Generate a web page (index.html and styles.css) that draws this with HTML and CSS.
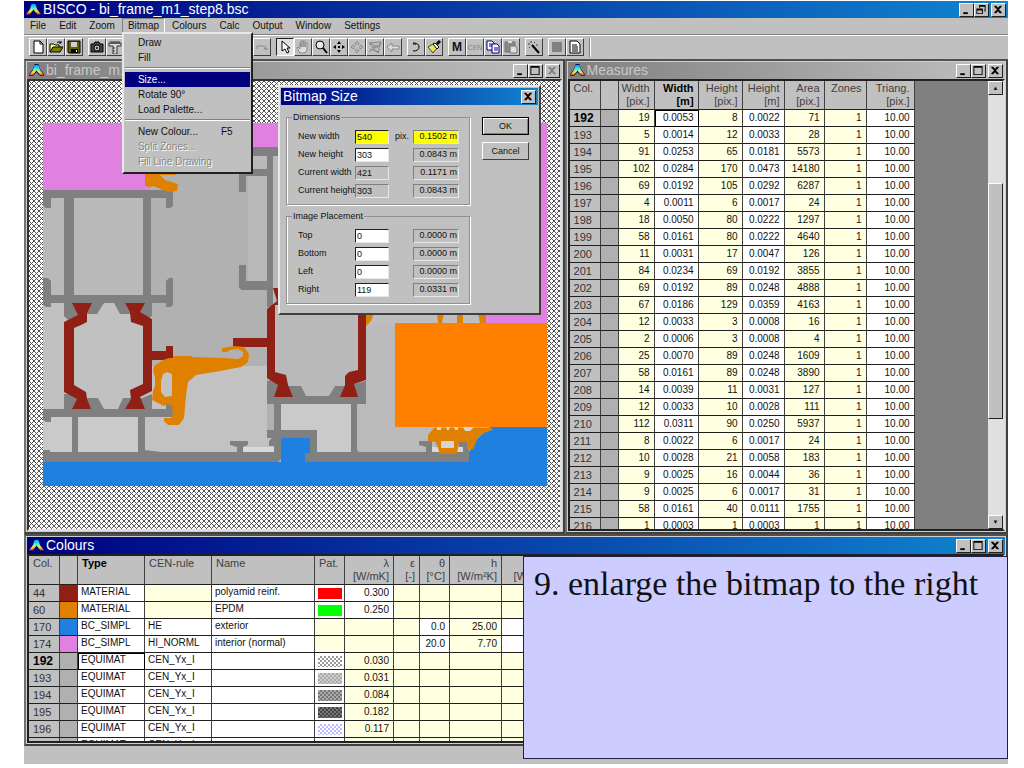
FILE: index.html
```html
<!DOCTYPE html>
<html lang="en">
<head>
    <meta charset="UTF-8">
    <meta name="viewport" content="width=device-width, initial-scale=1.0">
    <title>BISCO - bi_frame_m1_step8.bsc</title>
    <link rel="stylesheet" href="styles.css">
</head>
<body>
    <!-- shared icons -->
    <svg class="defs" aria-hidden="true">
        <defs>
            <linearGradient id="heat" x1="0" y1="0" x2="0" y2="1">
                <stop offset="0" stop-color="#00a0ff"/>
                <stop offset="0.4" stop-color="#40f0e0"/>
                <stop offset="0.7" stop-color="#ffe840"/>
                <stop offset="1" stop-color="#f04020"/>
            </linearGradient>
        </defs>
        <symbol id="logo" viewBox="0 0 16 14">
            <path d="M6 0h4l2 6 4 5v2h-4L8 9l-4 4H0v-2l4-5z" fill="#101050"/>
            <path d="M6 1h4l2 6 4 5h-4L8 7l-4 5H0l4-5z" fill="url(#heat)"/>
        </symbol>
        <symbol id="min" viewBox="0 0 12 12"><path d="M3 9h5v2H3z"/></symbol>
        <symbol id="max" viewBox="0 0 12 12"><path d="M1 1h10v10H1zM2 3v7h8V3z" fill-rule="evenodd"/></symbol>
        <symbol id="restore" viewBox="0 0 12 12"><path d="M4 1h7v7H9V7h1V3H5v1H4zM1 5h7v6H1zM2 7v3h5V7z" fill-rule="evenodd"/></symbol>
        <symbol id="close" viewBox="0 0 12 12"><path d="M2 2h2l2 2 2-2h2v1L7 6l3 3v1H8L6 8l-2 2H2V9l3-3-3-3z"/></symbol>
    </svg>

    <div class="app">
        <header class="titlebar active">
            <svg class="logo"><use href="#logo"/></svg>
            <h1>BISCO - bi_frame_m1_step8.bsc</h1>
            <div class="win-buttons">
                <button type="button" aria-label="Minimize"><svg><use href="#min"/></svg></button>
                <button type="button" aria-label="Restore"><svg><use href="#restore"/></svg></button>
                <button type="button" class="close" aria-label="Close"><svg><use href="#close"/></svg></button>
            </div>
        </header>

        <nav class="menubar">
            <button type="button">File</button>
            <button type="button">Edit</button>
            <button type="button">Zoom</button>
            <div class="menu-holder">
                <button type="button" class="open">Bitmap</button>
                <div class="dropdown">
                    <button type="button">Draw</button>
                    <button type="button">Fill</button>
                    <hr>
                    <button type="button" class="selected">Size...</button>
                    <button type="button">Rotate 90°</button>
                    <button type="button">Load Palette...</button>
                    <hr>
                    <button type="button"><span class="item">New Colour...</span><span>F5</span></button>
                    <button type="button" disabled>Split Zones...</button>
                    <button type="button" disabled>Fill Line Drawing</button>
                </div>
            </div>
            <button type="button">Colours</button>
            <button type="button">Calc</button>
            <button type="button">Output</button>
            <button type="button">Window</button>
            <button type="button">Settings</button>
        </nav>

        <div class="toolbar">
            <div class="group">
                <button type="button" aria-label="New"><svg viewBox="0 0 14 14"><path d="M3 1h6l3 3v9H3z" fill="#fff" stroke="#000"/><path d="M9 1v3h3" fill="none" stroke="#000"/></svg></button>
                <button type="button" aria-label="Open"><svg viewBox="0 0 14 14"><path d="M1 12V4h4l1 1h4v2" fill="#ffff80" stroke="#000"/><path d="M1 12l3-5h10l-3 5z" fill="#808000" stroke="#000"/><path d="M8 3q2-3 4 0M12 1v2h-2" fill="none" stroke="#000"/></svg></button>
                <button type="button" aria-label="Save"><svg viewBox="0 0 14 14"><path d="M1 1h12v12H2l-1-1z" fill="#606000" stroke="#000"/><path d="M4 2h6v5H4z" fill="#d0d0d0"/><path d="M4 9h7v4H4z"/><path d="M9 10h1v2H9z" fill="#fff"/></svg></button>
            </div>
            <div class="group">
                <button type="button" aria-label="Snapshot"><svg viewBox="0 0 14 14"><path d="M1 4h3l1-2h4l1 2h3v8H1z" fill="#444" stroke="#000"/><circle cx="7" cy="8" r="3" fill="#c0c0c0" stroke="#000"/><circle cx="7" cy="8" r="1"/></svg></button>
                <button type="button" aria-label="Measure"><svg viewBox="0 0 14 14"><path d="M1 3h12v3H9v8H5V6H1z" fill="#d8d8d8" stroke="#333"/><path d="M3 1v3M5 1v3M7 1v3M9 1v3M11 1v3M5 8h2M5 11h2" stroke="#333"/></svg></button>
            </div>
            <div class="group after-menu">
                <button type="button" aria-label="Repeat"><svg viewBox="0 0 14 14"><path d="M2 9V6h6q3 0 3 3M9 8l2 2 2-2" fill="none" stroke="#888"/></svg></button>
            </div>
            <div class="group">
                <button type="button" class="pressed" aria-label="Select"><svg viewBox="0 0 14 14"><path d="M4 1v10l3-2 2 4 2-1-2-4h3z" fill="#fff" stroke="#000"/></svg></button>
                <button type="button" aria-label="Pan"><svg viewBox="0 0 14 14"><path d="M4 13L1 8l1-1 2 2V3h1v4V1h2v6V1h2v6V3h2v7l-2 3z" fill="#ddd" stroke="#888"/></svg></button>
                <button type="button" aria-label="Zoom"><svg viewBox="0 0 14 14"><circle cx="6" cy="5" r="4" fill="#e8e8e8" stroke="#000"/><path d="M9 8l4 5" stroke="#000" stroke-width="2"/></svg></button>
                <button type="button" aria-label="Centre"><svg viewBox="0 0 14 14"><path d="M7 1l2 3H5zM7 13l2-3H5zM1 7l3-2v4zM13 7l-3-2v4zM6 6h2v2H6z"/></svg></button>
                <button type="button" aria-label="Move"><svg viewBox="0 0 14 14"><path d="M7 1l2 3H5zM7 13l2-3H5zM1 7l3-2v4zM13 7l-3-2v4z" fill="#ddd" stroke="#888"/></svg></button>
                <button type="button" aria-label="Mesh"><svg viewBox="0 0 14 14"><path d="M1 3l12-1-3 11zM1 3l9 4 3-5M4 7l6 0M2 9l9 3M1 12l9-7" fill="none" stroke="#888"/></svg></button>
                <button type="button" aria-label="Back"><svg viewBox="0 0 14 14"><path d="M1 7l5-4v3h7v3H6v3z" fill="#ddd" stroke="#888"/></svg></button>
            </div>
            <div class="group">
                <button type="button" aria-label="Arc"><svg viewBox="0 0 14 14"><path d="M4 3q6 0 6 4t-6 4" fill="none" stroke="#000"/><path d="M4 4h3" stroke="#000"/></svg></button>
                <button type="button" aria-label="Brush"><svg viewBox="0 0 14 14"><path d="M1 7l5-3 4 4-4 5z" fill="#f0e840" stroke="#444"/><path d="M6 4l2-1 4 4-2 2z" fill="#fff" stroke="#000"/><path d="M10 4l3-3" stroke="#000" stroke-width="3"/></svg></button>
            </div>
            <div class="group">
                <button type="button" class="letter">M</button>
                <button type="button" class="tiny">CEN</button>
                <button type="button" aria-label="Copy"><svg viewBox="0 0 14 14"><path d="M1 1h5l2 2v7H1z" fill="#fff" stroke="#000080"/><path d="M6 4h5l2 2v7H6z" fill="#fff" stroke="#000080"/><path d="M3 4h3M3 6h3M8 8h4M8 10h4" stroke="#000080"/></svg></button>
                <button type="button" aria-label="Paste"><svg viewBox="0 0 14 14"><path d="M1 2h10v10H1z" fill="#888" stroke="#777"/><path d="M4 1h4v2H4z" fill="#ddd"/><path d="M6 6h5l2 2v5H6z" fill="#ddd" stroke="#777"/></svg></button>
            </div>
            <div class="group">
                <button type="button" aria-label="Wizard"><svg viewBox="0 0 14 14"><path d="M5 5l7 8" stroke="#000" stroke-width="2"/><path d="M4 1v2M1 4h2M8 2L7 3M2 8l1-1M9 5h2" stroke="#444"/></svg></button>
            </div>
            <div class="group">
                <button type="button" aria-label="Stop"><svg viewBox="0 0 14 14"><path d="M2 2h10v10H2z" fill="#808080"/></svg></button>
                <button type="button" aria-label="Report"><svg viewBox="0 0 14 14"><path d="M2 1h7l3 3v9H2z" fill="#fff" stroke="#000"/><path d="M4 5h5M4 7h6M4 9h6M4 11h6" stroke="#000"/></svg></button>
            </div>
            <div class="tool-end"></div>
        </div>

        <main class="mdi">
            <section class="window bitmap">
                <div class="titlebar">
                    <svg class="logo"><use href="#logo"/></svg>
                    <h2>bi_frame_m1</h2>
                    <div class="win-buttons">
                        <button type="button" aria-label="Minimize"><svg><use href="#min"/></svg></button>
                        <button type="button" aria-label="Maximize"><svg><use href="#max"/></svg></button>
                        <button type="button" class="close" aria-label="Close" disabled><svg><use href="#close"/></svg></button>
                    </div>
                </div>
                <div class="canvas">
                    <svg class="drawing" viewBox="43 123 504 363" role="img" aria-label="Frame section">
                        <path d="M43 123h504v363H43z" fill="#b1b1b1"/>
                        <!-- air cavities -->
                        <g fill="#b9b9b9">
                            <path d="M43 198h21v97H43zM74 198h69v97H74zM248 156h19v13h-19zM248 176h19v105h-19zM273 156h85v240h-85z"/>
                        </g>
                        <path d="M43 303h21v106H43zM64 303h88v106H64z" fill="#c1c1c1"/>
                        <path d="M152 366h115v72h7v16H145v-37h7z" fill="#c2c2c2"/>
                        <path d="M357 315h38v112h40v25h-78z" fill="#bababa"/>
                        <path d="M366 313h120v12H366z" fill="#bebebe"/>
                        <path d="M43 417h29v35H43zM78 417h60v35H78zM281 404h70v48h-34v-22h-36z" fill="#cacaca"/>
                        <path d="M243 447h31v8h-31zM432 447h31v8h-31z" fill="#d9d9d9"/>
                        <!-- interior -->
                        <path d="M43 123h504v200h-61V147H240v27h-90v16H43z" fill="#e080e0"/>
                        <!-- exterior -->
                        <path d="M43 462h238v-24h29v24h159v-10l9-14 12-11h57v59H43z" fill="#2080e0"/>
                        <!-- aluminium -->
                        <g fill="#808080">
                            <path d="M43 190h130v16l-3 2h-4v-10H51v10h-5l-3-2zM64 198h10v97H64zM143 198h8v97h-8z"/>
                            <path d="M43 278h5l3 3v14h115v-14l3-3h4v27l-3 2h-4v-4H51v4h-5l-3-2z"/>
                            <path d="M64 303h40l-7 11H86l-18 6-4-4zM114 303h38v13l-4 3-8-5h-20z"/>
                            <path d="M64 409v-15h8l5 4h21l6 11 3 2h8l3-2 5-11h19l10-4v15z"/>
                            <path d="M43 409h123v-5h7v13H51v5h-5l-3-2zM72 417h6v35h-6zM138 417h7v33l16 2h-23z"/>
                            <path d="M43 450h7v2h224v-6h-5v-5l3-3h9v21l-3 3H43zM230 441h18v4l-5 2v5h-6v-5l-7-2z"/>
                            <path d="M239 147h50v9h-16v151h-6v-17h-25l-3-2v-23h7v16h21V176h-21v16h-7zM246 156v13h21v-13z" fill-rule="evenodd"/>
                            <path d="M267 381l8-2 4 7h22l5 10h23l6-10h11l12-3 8-2v23h-9v46l2 2h-8v-48h-70v26h36v22h109v-5l-7-2v-4h13v11h31v-5h-4v-6h10v21H305v-9h5v-15h-43v-8h7v-26h-7z"/>
                        </g>
                        <!-- polyamid -->
                        <g fill="#902015">
                            <path d="M72 303h20l-5 10v9l-6 3-7 3v57l12 7 1 7 4 10H72l5-10-13-7v-70l14-7z"/>
                            <path d="M125 303h20l-5 9 12 7v32h14v-5h7v20h-7v-6h-14v31l-12 6 5 12h-20l6-10-1-9 13-6v-58l-12-4-1-10z"/>
                            <path d="M273 288h14v17h-12v67l11 3 2 10 5 12h-19l4-12-11-7v-31h-34v-9h34v-29l10-8zM358 310h8v70l-12 4 4 13h-18l5-12v-9l4-4 9-2z"/>
                        </g>
                        <!-- EPDM gaskets -->
                        <g fill="#e08000">
                            <path d="M145 170h31v5h-16l5 5 13 4-1 7-9 1-15-6-3 1-5-1z"/>
                            <path fill-rule="evenodd" d="M173 356h19v1l33 1 13 1 5-3v-4l-5-3-8 1-3 2h-5v-4l12-2 10 1 5 7-1 8-7 5-21 4-24 4-8 7-2 14-2 22-5 7h-11l-4-4v-3h7l2-3-1-10-5-1-3 2-12-6 1-9 2-5v-8l-2-7 1-5 9-6 6-2h4zM163 374l-2 7v11l4 5 7-1v-22l-5-2z"/>
                            <path d="M366 313h8l-3 8-5 5zM437 313h7l-2 10h-4zM457 313h6v10h-6zM478 313h8v10h-6z"/>
                            <path d="M428 435l6-7h58v2l-8 3-6 4-5 12h-6v-7h-8l-2 12h-17l-4-12-8-1z"/>
                        </g>
                        <path d="M441 441h13v7h-13zM437 427h4v3h-4zM446 427h4l-1 3h-2zM454 427h4v3h-3zM463 427h11l-4 4h-5z" fill="#d5d5d5"/>
                        <path d="M395 323h152v104H395z" fill="#ff8000"/>
                    </svg>
                </div>
            </section>

            <section class="window measures">
                <div class="titlebar">
                    <svg class="logo"><use href="#logo"/></svg>
                    <h2>Measures</h2>
                    <div class="win-buttons">
                        <button type="button" aria-label="Minimize"><svg><use href="#min"/></svg></button>
                        <button type="button" aria-label="Maximize"><svg><use href="#max"/></svg></button>
                        <button type="button" class="close" aria-label="Close"><svg><use href="#close"/></svg></button>
                    </div>
                </div>
                <div class="sheet">
                    <div class="sheet-view">
                        <table id="measuresTable">
                            <colgroup>
                                <col class="w-num"><col class="w-swatch"><col class="w-36"><col class="w-44"><col class="w-44"><col class="w-42"><col class="w-40"><col class="w-42"><col class="w-48">
                            </colgroup>
                            <thead>
                                <tr>
                                    <th class="left">Col.</th>
                                    <th></th>
                                    <th>Width<br>[pix.]</th>
                                    <th class="current">Width<br>[m]</th>
                                    <th>Height<br>[pix.]</th>
                                    <th>Height<br>[m]</th>
                                    <th>Area<br>[pix.]</th>
                                    <th>Zones</th>
                                    <th>Triang.<br>[pix.]</th>
                                </tr>
                            </thead>
                            <tbody></tbody>
                        </table>
                    </div>
                    <div class="scrollbar">
                        <button type="button" aria-label="Scroll up">▲</button>
                        <div class="track"><div class="thumb"></div></div>
                        <button type="button" aria-label="Scroll down">▼</button>
                    </div>
                </div>
            </section>

            <section class="window colours">
                <div class="titlebar active">
                    <svg class="logo"><use href="#logo"/></svg>
                    <h2>Colours</h2>
                    <div class="win-buttons">
                        <button type="button" aria-label="Minimize"><svg><use href="#min"/></svg></button>
                        <button type="button" aria-label="Maximize"><svg><use href="#max"/></svg></button>
                        <button type="button" class="close" aria-label="Close"><svg><use href="#close"/></svg></button>
                    </div>
                </div>
                <div class="sheet">
                    <div class="sheet-view">
                        <table id="coloursTable">
                            <colgroup>
                                <col class="w-num"><col class="w-swatch"><col class="w-67"><col class="w-67"><col class="w-103"><col class="w-30"><col class="w-49"><col class="w-26"><col class="w-30"><col class="w-52"><col class="w-49">
                            </colgroup>
                            <thead>
                                <tr>
                                    <th class="left">Col.</th>
                                    <th></th>
                                    <th class="left current">Type</th>
                                    <th class="left">CEN-rule</th>
                                    <th class="left">Name</th>
                                    <th class="left">Pat.</th>
                                    <th>λ<br>[W/mK]</th>
                                    <th>ε<br>[-]</th>
                                    <th>θ<br>[°C]</th>
                                    <th>h<br>[W/m²K]</th>
                                    <th>q<br>[W/m²]</th>
                                </tr>
                            </thead>
                            <tbody></tbody>
                        </table>
                    </div>
                </div>
            </section>
        </main>

        <footer class="statusbar"></footer>

        <form class="dialog">
            <div class="titlebar active">
                <h2>Bitmap Size</h2>
                <div class="win-buttons">
                    <button type="button" class="close" aria-label="Close"><svg><use href="#close"/></svg></button>
                </div>
            </div>
            <div class="dialog-body">
                <div class="fields">
                    <fieldset>
                        <legend>Dimensions</legend>
                        <div class="field changed">
                            <label for="newWidth">New width</label>
                            <input type="text" id="newWidth" value="540">
                            <span>pix.</span>
                            <output for="newWidth">0.1502 m</output>
                        </div>
                        <div class="field">
                            <label for="newHeight">New height</label>
                            <input type="text" id="newHeight" value="303">
                            <output for="newHeight">0.0843 m</output>
                        </div>
                        <div class="field">
                            <label for="currentWidth">Current width</label>
                            <input type="text" id="currentWidth" value="421" readonly>
                            <output for="currentWidth">0.1171 m</output>
                        </div>
                        <div class="field">
                            <label for="currentHeight">Current height</label>
                            <input type="text" id="currentHeight" value="303" readonly>
                            <output for="currentHeight">0.0843 m</output>
                        </div>
                    </fieldset>
                    <fieldset>
                        <legend>Image Placement</legend>
                        <div class="field">
                            <label for="top">Top</label>
                            <input type="text" id="top" value="0">
                            <output for="top">0.0000 m</output>
                        </div>
                        <div class="field">
                            <label for="bottom">Bottom</label>
                            <input type="text" id="bottom" value="0">
                            <output for="bottom">0.0000 m</output>
                        </div>
                        <div class="field">
                            <label for="left">Left</label>
                            <input type="text" id="left" value="0">
                            <output for="left">0.0000 m</output>
                        </div>
                        <div class="field">
                            <label for="right">Right</label>
                            <input type="text" id="right" value="119">
                            <output for="right">0.0331 m</output>
                        </div>
                    </fieldset>
                </div>
                <div class="actions">
                    <button type="submit" class="default">OK</button>
                    <button type="button">Cancel</button>
                </div>
            </div>
        </form>

        <p class="note">9. enlarge the bitmap to the right</p>
    </div>

    <script>
        // col, width pix, width m, height pix, height m, area
        const measures = [
            [192, 19, '0.0053', 8, '0.0022', 71],
            [193, 5, '0.0014', 12, '0.0033', 28],
            [194, 91, '0.0253', 65, '0.0181', 5573],
            [195, 102, '0.0284', 170, '0.0473', 14180],
            [196, 69, '0.0192', 105, '0.0292', 6287],
            [197, 4, '0.0011', 6, '0.0017', 24],
            [198, 18, '0.0050', 80, '0.0222', 1297],
            [199, 58, '0.0161', 80, '0.0222', 4640],
            [200, 11, '0.0031', 17, '0.0047', 126],
            [201, 84, '0.0234', 69, '0.0192', 3855],
            [202, 69, '0.0192', 89, '0.0248', 4888],
            [203, 67, '0.0186', 129, '0.0359', 4163],
            [204, 12, '0.0033', 3, '0.0008', 16],
            [205, 2, '0.0006', 3, '0.0008', 4],
            [206, 25, '0.0070', 89, '0.0248', 1609],
            [207, 58, '0.0161', 89, '0.0248', 3890],
            [208, 14, '0.0039', 11, '0.0031', 127],
            [209, 12, '0.0033', 10, '0.0028', 111],
            [210, 112, '0.0311', 90, '0.0250', 5937],
            [211, 8, '0.0022', 6, '0.0017', 24],
            [212, 10, '0.0028', 21, '0.0058', 183],
            [213, 9, '0.0025', 16, '0.0044', 36],
            [214, 9, '0.0025', 6, '0.0017', 31],
            [215, 58, '0.0161', 40, '0.0111', 1755],
            [216, 1, '0.0003', 1, '0.0003', 1]
        ];

        // null = cell that cannot be edited
        const colours = [
            [44, 'red', 'MATERIAL', null, 'polyamid reinf.', 'solid-red', '0.300', null, null, null, null],
            [60, 'orange', 'MATERIAL', null, 'EPDM', 'solid-green', '0.250', null, null, null, null],
            [170, 'blue', 'BC_SIMPL', 'HE', 'exterior', null, null, null, '0.0', '25.00', ''],
            [174, 'pink', 'BC_SIMPL', 'HI_NORML', 'interior (normal)', null, null, null, '20.0', '7.70', ''],
            [192, 'grey', 'EQUIMAT', 'CEN_Yx_I', '', 'dots', '0.030', null, null, null, null],
            [193, 'grey', 'EQUIMAT', 'CEN_Yx_I', '', 'dots-light', '0.031', null, null, null, null],
            [194, 'grey', 'EQUIMAT', 'CEN_Yx_I', '', 'dots-mid', '0.084', null, null, null, null],
            [195, 'grey', 'EQUIMAT', 'CEN_Yx_I', '', 'dots-dark', '0.182', null, null, null, null],
            [196, 'grey', 'EQUIMAT', 'CEN_Yx_I', '', 'dots-blue', '0.117', null, null, null, null],
            [197, 'grey', 'EQUIMAT', 'CEN_Yx_I', '', 'dots', '0.029', null, null, null, null]
        ];

        function addCell(row, text, className) {
            const cell = document.createElement('td');
            cell.textContent = text;
            cell.className = className;
            row.appendChild(cell);
            return cell;
        }

        function loadMeasures() {
            const tbody = document.querySelector('#measuresTable tbody');
            measures.forEach(item => {
                const row = document.createElement('tr');
                const current = item[0] === 192;
                addCell(row, item[0], current ? 'head current' : 'head');
                addCell(row, '', 'swatch grey');
                addCell(row, item[1], 'locked');
                addCell(row, item[2], current ? 'cursor' : '');
                addCell(row, item[3], 'locked');
                addCell(row, item[4], '');
                addCell(row, item[5], 'locked');
                addCell(row, 1, 'locked');
                addCell(row, '10.00', '');
                tbody.appendChild(row);
            });
        }

        function loadColours() {
            const tbody = document.querySelector('#coloursTable tbody');
            colours.forEach(item => {
                const row = document.createElement('tr');
                const current = item[0] === 192;
                addCell(row, item[0], current ? 'head current' : 'head');
                addCell(row, '', 'swatch ' + item[1]);
                addCell(row, item[2], current ? 'text cursor' : 'text');
                addCell(row, item[3] || '', item[3] === null ? 'locked' : 'text');
                addCell(row, item[4], 'text');
                const pattern = addCell(row, '', item[5] ? '' : 'locked');
                if (item[5]) {
                    const box = document.createElement('div');
                    box.className = 'pattern ' + item[5];
                    pattern.appendChild(box);
                }
                const lambdaLocked = item[6] === null || item[2] === 'EQUIMAT';
                addCell(row, item[6] || '', lambdaLocked ? 'locked' : '');
                addCell(row, '', 'locked');
                addCell(row, item[8] || '', item[8] === null ? 'locked' : '');
                addCell(row, item[9] || '', 'locked');
                addCell(row, '', item[10] === null ? 'locked' : '');
                tbody.appendChild(row);
            });
        }

        loadMeasures();
        loadColours();
    </script>
</body>
</html>
```

FILE: styles.css
```css
* {
    box-sizing: border-box;
}
body {
    margin: 1px 16px 0 24px;
    font-family: "Liberation Sans", Arial, sans-serif;
    font-size: 10px;
    background-color: #fff;
    color: #111;
}
h1, h2, p {
    margin: 0;
}
button, input {
    font: inherit;
    color: inherit;
    border-radius: 0;
}
button {
    padding: 0;
}
.defs {
    position: absolute;
    width: 0;
    height: 0;
}
.app {
    position: relative;
    display: flex;
    flex-direction: column;
    height: calc(100vh - 5px);
    background-color: #c0c0c0;
}

/* title bars */
.titlebar {
    display: flex;
    flex: none;
    align-items: center;
    gap: 2px;
    height: 17px;
    padding: 0 2px;
    background: linear-gradient(to right, #808080, #c0c0c0);
    color: #c8c8c8;
}
.titlebar.active {
    background: linear-gradient(to right, #000080, #1084d0);
    color: #fff;
}
.titlebar h1, .titlebar h2 {
    flex: 1;
    overflow: hidden;
    font-size: 14px;
    font-weight: normal;
    line-height: 17px;
    white-space: nowrap;
}
.logo {
    width: 15px;
    height: 13px;
}
.win-buttons {
    display: flex;
}
.win-buttons button {
    width: 15px;
    height: 14px;
    border: 1px solid;
    border-color: #fff #202020 #202020 #fff;
    background-color: #c0c0c0;
    color: #000;
}
.win-buttons button:disabled {
    color: #808080;
}
.win-buttons .close {
    margin-left: 2px;
}
.win-buttons svg {
    display: block;
    width: 12px;
    height: 11px;
    fill: currentColor;
}

/* menu */
.menubar {
    display: flex;
    gap: 1px;
    height: 17px;
    border-bottom: 1px solid #808080;
}
.menubar button {
    padding: 0 5px;
    border: 1px solid transparent;
    background: none;
    line-height: 14px;
}
.menu-holder {
    position: relative;
}
.menubar .open {
    border-color: #808080 #fff #fff #808080;
}
.dropdown {
    position: absolute;
    z-index: 3;
    top: 14px;
    left: 0;
    width: 131px;
    padding: 1px 1px 3px;
    border: 2px solid;
    border-color: #e8e8e8 #202020 #202020 #e8e8e8;
    background-color: #c0c0c0;
}
.dropdown button {
    display: flex;
    width: 100%;
    height: 15px;
    padding: 0 13px;
    border: 0;
    line-height: 15px;
}
.dropdown .item {
    width: 83px;
    text-align: left;
}
.dropdown .selected {
    background-color: #000080;
    color: #fff;
}
.dropdown button:disabled {
    color: #888;
    text-shadow: 1px 1px #fff;
}
.dropdown hr {
    height: 2px;
    margin: 2px 0 3px;
    border: 0;
    border-top: 1px solid #808080;
    border-bottom: 1px solid #fff;
}

/* toolbar */
.toolbar {
    display: flex;
    gap: 5px;
    height: 24px;
    padding: 2px 5px;
    border-top: 1px solid #fff;
}
.group {
    display: flex;
}
.after-menu {
    margin-left: 124px;
}
.group button {
    width: 18px;
    height: 18px;
    border: 1px solid;
    border-color: #fff #404040 #404040 #fff;
    background-color: #c0c0c0;
}
.group svg {
    display: block;
    width: 14px;
    height: 14px;
    margin: 0 auto;
}
.group .pressed {
    border-color: #202020 #fff #fff #202020;
    background-color: #e0e0e0;
}
.group .letter {
    font-size: 12px;
    font-weight: bold;
}
.group .tiny {
    font-size: 7px;
    color: #808080;
}
.tool-end {
    border-left: 1px solid #808080;
    border-right: 1px solid #fff;
}

/* child windows */
.mdi {
    display: grid;
    flex: 1;
    grid-template-columns: minmax(0, 540fr) minmax(0, 443fr);
    grid-template-rows: minmax(0, 475fr) minmax(0, 212fr);
    min-height: 0;
}
.window {
    display: flex;
    flex-direction: column;
    min-height: 0;
    padding: 1px;
    border: 2px solid;
    border-color: #505050 #404040 #404040 #707070;
    background-color: #d0d0d0;
}
.colours {
    grid-column: 1 / 3;
}
.canvas {
    flex: 1;
    min-height: 0;
    padding: 42px 14px;
    overflow: hidden;
    border: 2px solid;
    border-color: #303030 #e0e0e0 #e0e0e0 #303030;
    background: #fff url("data:image/svg+xml,%3Csvg xmlns='http://www.w3.org/2000/svg' width='5' height='5'%3E%3Cpath d='M0 0l5 5M5 0L0 5' stroke='%23555'/%3E%3C/svg%3E");
}
.drawing {
    display: block;
    width: 504px;
    height: 363px;
}

/* sheets */
.sheet {
    display: flex;
    flex: 1;
    min-height: 0;
    border: 2px solid;
    border-color: #202020 #e0e0e0 #202020 #202020;
    background-color: #808080;
}
.sheet-view {
    flex: 1;
    overflow: hidden;
}
table {
    table-layout: fixed;
    width: 0;
    border-collapse: separate;
    border-spacing: 0;
}
th, td {
    padding: 0 4px 0 0;
    border-right: 1px solid #404040;
    border-bottom: 1px solid #202020;
    overflow: hidden;
    text-align: right;
    vertical-align: top;
    white-space: nowrap;
}
th {
    height: 29px;
    padding-top: 1px;
    background-color: #c0c0c0;
    color: #404040;
    font-size: 11px;
    font-weight: normal;
    line-height: 13px;
}
th.left {
    padding: 1px 0 0 4px;
    text-align: left;
}
th.current {
    color: #000;
    font-weight: bold;
}
td {
    height: 17px;
    background-color: #fff;
    font-size: 10px;
    line-height: 15px;
}
td.locked {
    background-color: #ffffe1;
}
td.head {
    padding: 0 0 0 4px;
    background-color: #c0c0c0;
    color: #333;
    font-size: 11px;
    line-height: 16px;
    text-align: left;
}
td.head.current {
    color: #000;
    font-size: 12px;
    font-weight: bold;
}
td.text {
    padding: 0 0 0 3px;
    line-height: 14px;
    text-align: left;
}
td.cursor {
    outline: 1px solid #000;
    outline-offset: -1px;
}
.w-num { width: 31px; }
.w-swatch { width: 18px; }
.w-26 { width: 26px; }
.w-30 { width: 30px; }
.w-36 { width: 36px; }
.w-40 { width: 40px; }
.w-42 { width: 42px; }
.w-44 { width: 44px; }
.w-48 { width: 48px; }
.w-49 { width: 49px; }
.w-52 { width: 52px; }
.w-67 { width: 67px; }
.w-103 { width: 103px; }
td.red { background-color: #902015; }
td.orange { background-color: #e08000; }
td.blue { background-color: #2080e0; }
td.pink { background-color: #e080e0; }
td.grey { background-color: #b0b0b0; }
.pattern {
    width: 24px;
    height: 11px;
    margin: 3px 0 0 3px;
}
.solid-red { background-color: #f00; }
.solid-green { background-color: #0f0; }
.dots { background: repeating-conic-gradient(#999 0 25%, #fff 0 50%) 0 0 / 4px 4px; }
.dots-light { background: repeating-conic-gradient(#aaa 0 25%, #ccc 0 50%) 0 0 / 4px 4px; }
.dots-mid { background: repeating-conic-gradient(#777 0 25%, #aaa 0 50%) 0 0 / 4px 4px; }
.dots-dark { background: repeating-conic-gradient(#444 0 25%, #777 0 50%) 0 0 / 4px 4px; }
.dots-blue { background: repeating-conic-gradient(#bbf 0 25%, #fff 0 50%) 0 0 / 4px 4px; }

.scrollbar {
    display: flex;
    flex-direction: column;
    width: 15px;
}
.scrollbar button {
    height: 14px;
    border: 1px solid;
    border-color: #fff #202020 #202020 #fff;
    background-color: #c0c0c0;
    font-size: 6px;
    line-height: 10px;
}
.track {
    flex: 1;
    padding-top: 88px;
    background-color: #e0e0e0;
}
.thumb {
    height: 71%;
    border: 1px solid;
    border-color: #fff #202020 #202020 #fff;
    background-color: #c0c0c0;
}
.statusbar {
    flex: none;
    height: 18px;
}

/* bitmap size dialog */
.dialog {
    position: absolute;
    z-index: 2;
    top: 84px;
    left: 254px;
    width: 263px;
    padding: 1px;
    border: 2px solid;
    border-color: #e8e8e8 #404040 #404040 #e8e8e8;
    background-color: #c0c0c0;
    font-size: 9px;
}
.dialog-body {
    display: flex;
    gap: 12px;
    padding: 6px 5px 8px;
}
.fields {
    display: flex;
    flex-direction: column;
    gap: 5px;
    width: 184px;
}
fieldset {
    display: flex;
    flex-direction: column;
    gap: 5px;
    margin: 0;
    padding: 7px 0 7px 11px;
    border: 1px solid #909090;
    box-shadow: 1px 1px #fff, inset 1px 0 #fff;
}
legend {
    margin-left: -6px;
    padding: 0 1px;
    line-height: 12px;
}
.field {
    display: grid;
    grid-template-columns: 57px 34px 24px 46px;
    height: 13px;
    line-height: 12px;
}
.field label {
    white-space: nowrap;
}
.field input {
    min-width: 0;
    padding: 0 1px;
    border: 1px solid;
    border-color: #202020 #e8e8e8 #e8e8e8 #202020;
    background-color: #fff;
}
.field input:read-only {
    border-color: #808080 #e8e8e8 #e8e8e8 #808080;
    background-color: #c0c0c0;
}
.field span {
    padding-left: 6px;
}
.field output {
    grid-column: 4;
    padding-right: 1px;
    border: 1px solid;
    border-color: #808080 #e8e8e8 #e8e8e8 #808080;
    line-height: 11px;
    text-align: right;
    white-space: nowrap;
}
.field.changed input, .field.changed output {
    background-color: #ff0;
}
.actions {
    display: flex;
    flex: 1;
    flex-direction: column;
    gap: 7px;
    padding-top: 6px;
}
.actions button {
    width: 47px;
    height: 18px;
    border: 1px solid;
    border-color: #fff #404040 #404040 #fff;
    background-color: #c0c0c0;
}
.actions .default {
    border-color: #000;
    box-shadow: inset 1px 1px #fff, inset -1px -1px #808080;
}

/* slide text over the lower window */
.note {
    position: absolute;
    z-index: 4;
    top: 555px;
    right: 0;
    bottom: 5px;
    left: 499px;
    padding: 8px 10px;
    border: 1px solid #202040;
    background-color: #ccf;
    font-family: "Liberation Serif", "Times New Roman", serif;
    font-size: 34px;
    line-height: 38px;
}
```
